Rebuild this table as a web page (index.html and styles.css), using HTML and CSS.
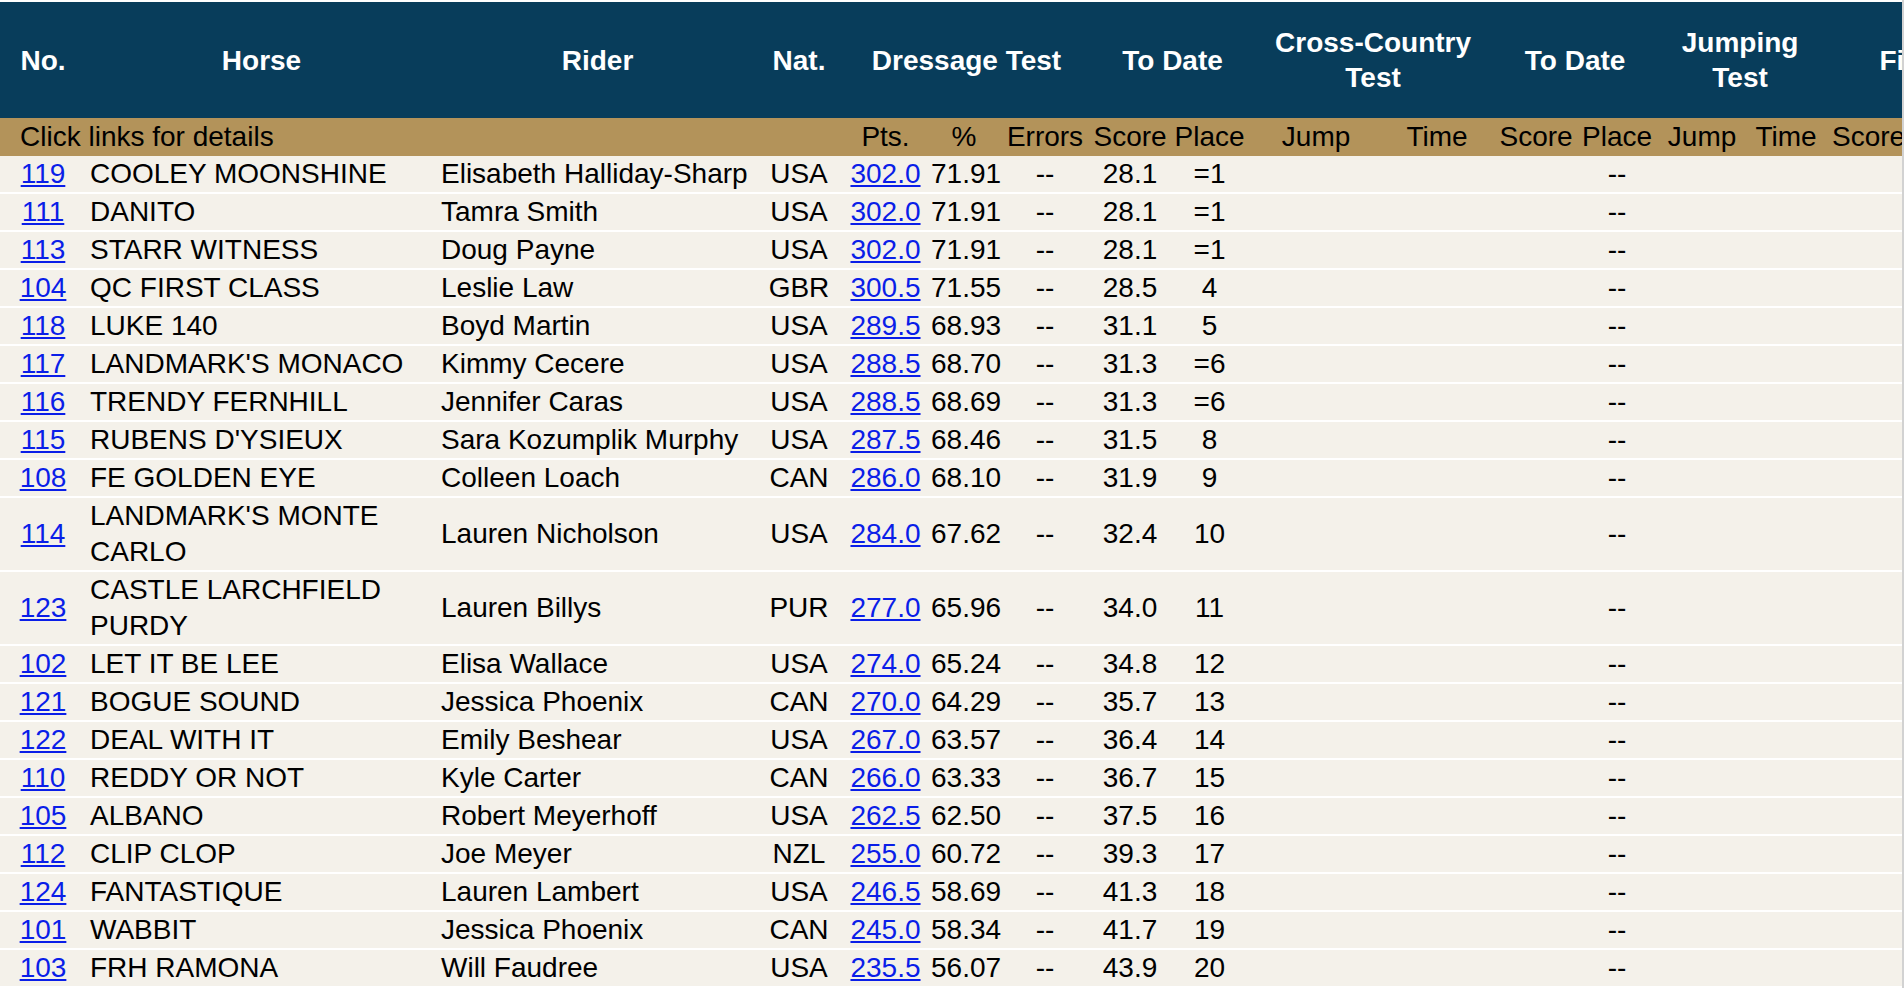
FILE: index.html
```html
<!DOCTYPE html>
<html lang="en">
<head>
<meta charset="utf-8">
<title>Results</title>
<link rel="stylesheet" href="styles.css">
</head>
<body>
<div class="frame">
<table class="results">
<colgroup>
<col class="w86"><col class="w351"><col class="w321"><col class="w82">
<col class="w91"><col class="w66"><col class="w96">
<col class="w74"><col class="w85">
<col class="w128"><col class="w114">
<col class="w84"><col class="w78">
<col class="w92"><col class="w76">
<col class="w89"><col class="w87">
</colgroup>
<thead>
<tr class="main-head">
<th>No.</th><th>Horse</th><th>Rider</th><th>Nat.</th>
<th colspan="3">Dressage Test</th>
<th colspan="2">To Date</th>
<th colspan="2">Cross-Country Test</th>
<th colspan="2">To Date</th>
<th colspan="2">Jumping Test</th>
<th colspan="2">Final</th>
</tr>
<tr class="sub-head">
<td colspan="4" class="note">Click links for details</td>
<td>Pts.</td><td>%</td><td>Errors</td>
<td>Score</td><td>Place</td>
<td>Jump</td><td>Time</td>
<td>Score</td><td>Place</td>
<td>Jump</td><td>Time</td>
<td>Score</td><td>Place</td>
</tr>
</thead>
<tbody>
<tr><td><a href="#">119</a></td><td class="name">COOLEY MOONSHINE</td><td class="name">Elisabeth Halliday-Sharp</td><td>USA</td><td><a href="#">302.0</a></td><td>71.91</td><td>--</td><td>28.1</td><td>=1</td><td></td><td></td><td></td><td>--</td><td></td><td></td><td></td><td></td></tr>
<tr><td><a href="#">111</a></td><td class="name">DANITO</td><td class="name">Tamra Smith</td><td>USA</td><td><a href="#">302.0</a></td><td>71.91</td><td>--</td><td>28.1</td><td>=1</td><td></td><td></td><td></td><td>--</td><td></td><td></td><td></td><td></td></tr>
<tr><td><a href="#">113</a></td><td class="name">STARR WITNESS</td><td class="name">Doug Payne</td><td>USA</td><td><a href="#">302.0</a></td><td>71.91</td><td>--</td><td>28.1</td><td>=1</td><td></td><td></td><td></td><td>--</td><td></td><td></td><td></td><td></td></tr>
<tr><td><a href="#">104</a></td><td class="name">QC FIRST CLASS</td><td class="name">Leslie Law</td><td>GBR</td><td><a href="#">300.5</a></td><td>71.55</td><td>--</td><td>28.5</td><td>4</td><td></td><td></td><td></td><td>--</td><td></td><td></td><td></td><td></td></tr>
<tr><td><a href="#">118</a></td><td class="name">LUKE 140</td><td class="name">Boyd Martin</td><td>USA</td><td><a href="#">289.5</a></td><td>68.93</td><td>--</td><td>31.1</td><td>5</td><td></td><td></td><td></td><td>--</td><td></td><td></td><td></td><td></td></tr>
<tr><td><a href="#">117</a></td><td class="name">LANDMARK'S MONACO</td><td class="name">Kimmy Cecere</td><td>USA</td><td><a href="#">288.5</a></td><td>68.70</td><td>--</td><td>31.3</td><td>=6</td><td></td><td></td><td></td><td>--</td><td></td><td></td><td></td><td></td></tr>
<tr><td><a href="#">116</a></td><td class="name">TRENDY FERNHILL</td><td class="name">Jennifer Caras</td><td>USA</td><td><a href="#">288.5</a></td><td>68.69</td><td>--</td><td>31.3</td><td>=6</td><td></td><td></td><td></td><td>--</td><td></td><td></td><td></td><td></td></tr>
<tr><td><a href="#">115</a></td><td class="name">RUBENS D'YSIEUX</td><td class="name">Sara Kozumplik Murphy</td><td>USA</td><td><a href="#">287.5</a></td><td>68.46</td><td>--</td><td>31.5</td><td>8</td><td></td><td></td><td></td><td>--</td><td></td><td></td><td></td><td></td></tr>
<tr><td><a href="#">108</a></td><td class="name">FE GOLDEN EYE</td><td class="name">Colleen Loach</td><td>CAN</td><td><a href="#">286.0</a></td><td>68.10</td><td>--</td><td>31.9</td><td>9</td><td></td><td></td><td></td><td>--</td><td></td><td></td><td></td><td></td></tr>
<tr><td><a href="#">114</a></td><td class="name">LANDMARK'S MONTE CARLO</td><td class="name">Lauren Nicholson</td><td>USA</td><td><a href="#">284.0</a></td><td>67.62</td><td>--</td><td>32.4</td><td>10</td><td></td><td></td><td></td><td>--</td><td></td><td></td><td></td><td></td></tr>
<tr><td><a href="#">123</a></td><td class="name">CASTLE LARCHFIELD PURDY</td><td class="name">Lauren Billys</td><td>PUR</td><td><a href="#">277.0</a></td><td>65.96</td><td>--</td><td>34.0</td><td>11</td><td></td><td></td><td></td><td>--</td><td></td><td></td><td></td><td></td></tr>
<tr><td><a href="#">102</a></td><td class="name">LET IT BE LEE</td><td class="name">Elisa Wallace</td><td>USA</td><td><a href="#">274.0</a></td><td>65.24</td><td>--</td><td>34.8</td><td>12</td><td></td><td></td><td></td><td>--</td><td></td><td></td><td></td><td></td></tr>
<tr><td><a href="#">121</a></td><td class="name">BOGUE SOUND</td><td class="name">Jessica Phoenix</td><td>CAN</td><td><a href="#">270.0</a></td><td>64.29</td><td>--</td><td>35.7</td><td>13</td><td></td><td></td><td></td><td>--</td><td></td><td></td><td></td><td></td></tr>
<tr><td><a href="#">122</a></td><td class="name">DEAL WITH IT</td><td class="name">Emily Beshear</td><td>USA</td><td><a href="#">267.0</a></td><td>63.57</td><td>--</td><td>36.4</td><td>14</td><td></td><td></td><td></td><td>--</td><td></td><td></td><td></td><td></td></tr>
<tr><td><a href="#">110</a></td><td class="name">REDDY OR NOT</td><td class="name">Kyle Carter</td><td>CAN</td><td><a href="#">266.0</a></td><td>63.33</td><td>--</td><td>36.7</td><td>15</td><td></td><td></td><td></td><td>--</td><td></td><td></td><td></td><td></td></tr>
<tr><td><a href="#">105</a></td><td class="name">ALBANO</td><td class="name">Robert Meyerhoff</td><td>USA</td><td><a href="#">262.5</a></td><td>62.50</td><td>--</td><td>37.5</td><td>16</td><td></td><td></td><td></td><td>--</td><td></td><td></td><td></td><td></td></tr>
<tr><td><a href="#">112</a></td><td class="name">CLIP CLOP</td><td class="name">Joe Meyer</td><td>NZL</td><td><a href="#">255.0</a></td><td>60.72</td><td>--</td><td>39.3</td><td>17</td><td></td><td></td><td></td><td>--</td><td></td><td></td><td></td><td></td></tr>
<tr><td><a href="#">124</a></td><td class="name">FANTASTIQUE</td><td class="name">Lauren Lambert</td><td>USA</td><td><a href="#">246.5</a></td><td>58.69</td><td>--</td><td>41.3</td><td>18</td><td></td><td></td><td></td><td>--</td><td></td><td></td><td></td><td></td></tr>
<tr><td><a href="#">101</a></td><td class="name">WABBIT</td><td class="name">Jessica Phoenix</td><td>CAN</td><td><a href="#">245.0</a></td><td>58.34</td><td>--</td><td>41.7</td><td>19</td><td></td><td></td><td></td><td>--</td><td></td><td></td><td></td><td></td></tr>
<tr><td><a href="#">103</a></td><td class="name">FRH RAMONA</td><td class="name">Will Faudree</td><td>USA</td><td><a href="#">235.5</a></td><td>56.07</td><td>--</td><td>43.9</td><td>20</td><td></td><td></td><td></td><td>--</td><td></td><td></td><td></td><td></td></tr>
</tbody>
</table>
</div>
</body>
</html>
```

FILE: styles.css
```css
html, body {
  margin: 0;
  padding: 0;
  background: #ffffff;
  overflow: hidden;
}

.frame {
  width: 1902px;
  height: 986px;
  padding-top: 2px;
  overflow: hidden;
  border-right: 2px solid #d2d2d2;
}

.results {
  table-layout: fixed;
  width: 2000px;
  border-collapse: separate;
  border-spacing: 0;
  font-family: "Liberation Sans", Arial, Helvetica, sans-serif;
  font-size: 28px;
  color: #000;
}

.w86 { width: 86px; }
.w351 { width: 351px; }
.w321 { width: 321px; }
.w82 { width: 82px; }
.w91 { width: 91px; }
.w66 { width: 66px; }
.w96 { width: 96px; }
.w74 { width: 74px; }
.w85 { width: 85px; }
.w128 { width: 128px; }
.w114 { width: 114px; }
.w84 { width: 84px; }
.w78 { width: 78px; }
.w92 { width: 92px; }
.w76 { width: 76px; }
.w89 { width: 89px; }
.w87 { width: 87px; }

.main-head th {
  background: #083d5b;
  color: #ffffff;
  font-weight: bold;
  height: 116px;
  padding: 0;
  line-height: 35px;
  text-align: center;
  vertical-align: middle;
}

.sub-head td {
  background: #b3935a;
  color: #000;
  height: 38px;
  line-height: 38px;
  padding: 0;
  text-align: center;
  white-space: nowrap;
  overflow: visible;
}

.sub-head td.note {
  text-align: left;
  padding-left: 20px;
}

tbody td {
  background: #f4f1ea;
  border-bottom: 2px solid #ffffff;
  padding: 0;
  line-height: 36px;
  text-align: center;
  vertical-align: middle;
  white-space: nowrap;
}

tbody td.name {
  text-align: left;
  padding-left: 4px;
  white-space: normal;
}

tbody a {
  color: #0a1ee8;
  text-decoration: underline;
}
```
